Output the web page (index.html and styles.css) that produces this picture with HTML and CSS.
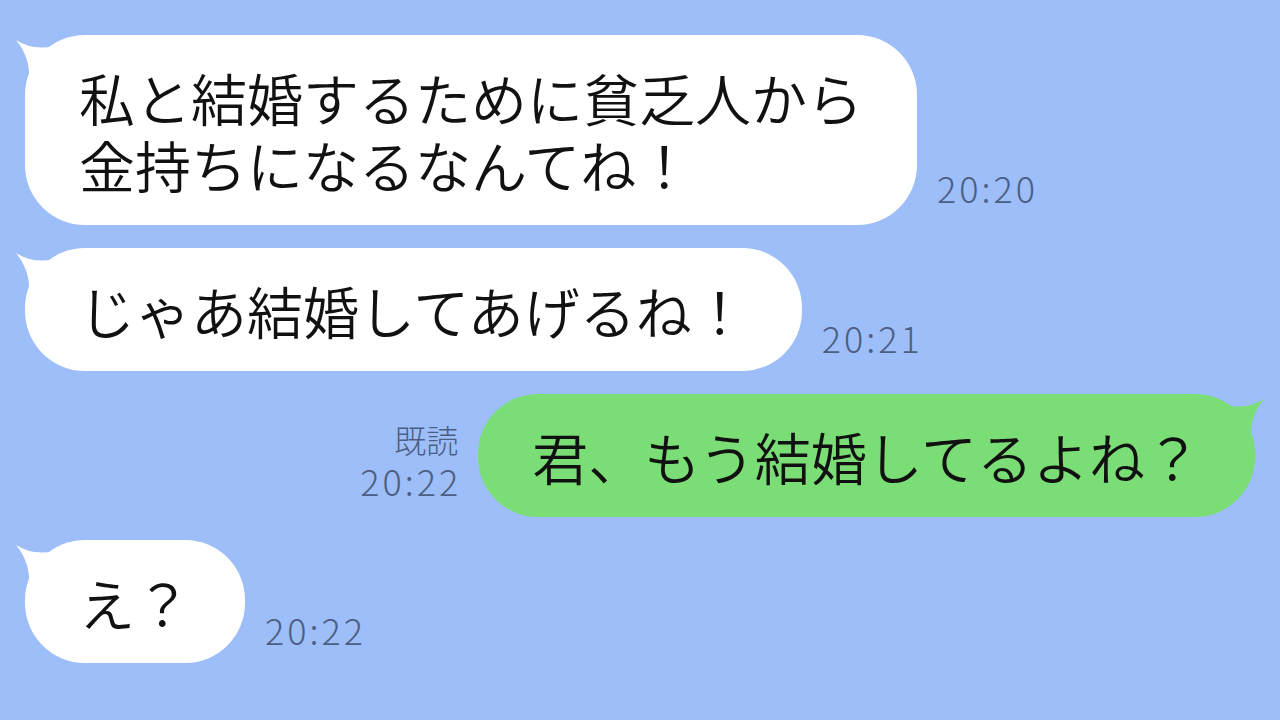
FILE: index.html
```html
<!DOCTYPE html>
<html lang="ja">
<head>
  <meta charset="UTF-8" />
  <meta name="viewport" content="width=device-width, initial-scale=1" />
  <title>トーク</title>
  <link rel="stylesheet" href="styles.css">
</head>
<body>
  <div class="talk">

    <div class="row">
      <div class="bubble">
        <svg class="tail" viewBox="0 0 44 44"><path d="M1 2 Q18 13 40 8 L44 44 L14 44 Q16 20 1 2 Z"/></svg>
        私と結婚するために貧乏人から<br>金持ちになるなんてね！
      </div>
      <div class="time t1">20:20</div>
    </div>

    <div class="row">
      <div class="bubble">
        <svg class="tail" viewBox="0 0 44 44"><path d="M1 2 Q18 13 40 8 L44 44 L14 44 Q16 20 1 2 Z"/></svg>
        じゃあ結婚してあげるね！
      </div>
      <div class="time">20:21</div>
    </div>

    <div class="row mine">
      <div class="meta">
        <span class="read">既読</span>
        <span class="time">20:22</span>
      </div>
      <div class="bubble">
        <svg class="tail" viewBox="0 0 44 44"><path d="M1 2 Q18 13 40 8 L44 44 L14 44 Q16 20 1 2 Z"/></svg>
        君、もう結婚してるよね？
      </div>
    </div>

    <div class="row">
      <div class="bubble">
        <svg class="tail" viewBox="0 0 44 44"><path d="M1 2 Q18 13 40 8 L44 44 L14 44 Q16 20 1 2 Z"/></svg>
        え？
      </div>
      <div class="time">20:22</div>
    </div>

  </div>
</body>
</html>
```

FILE: styles.css
```css
body {
  margin: 0;
  background: #9dbef8;
  font-family: "Noto Sans CJK JP", "Noto Sans", sans-serif;
  font-weight: 350;
  color: #111;
  width: 1280px;
  height: 720px;
  overflow: hidden;
}

.talk {
  display: flex;
  flex-direction: column;
  gap: 23px;
  padding: 35px 25px 0;
}

.row {
  display: flex;
  align-items: flex-end;
  gap: 20px;
}

.row.mine {
  justify-content: flex-end;
}

.bubble {
  position: relative;
  background: #fff;
  border-radius: 60px;
  padding: 28px 54px;
  font-size: 56px;
  line-height: 67px;
  white-space: nowrap;
}

.tail {
  position: absolute;
  left: -10px;
  top: 3px;
  width: 44px;
  height: 44px;
  fill: #fff;
}

.mine .bubble {
  background: #7bdd76;
}

.mine .tail {
  left: auto;
  right: -10px;
  fill: #7bdd76;
  transform: scaleX(-1);
}

.time {
  color: #4c5f83;
  font-size: 36px;
  font-weight: 300;
  line-height: 40px;
  letter-spacing: 3px;
  margin-bottom: 14px;
}

.time.t1 {
  margin-bottom: 18px;
}

.meta {
  display: flex;
  flex-direction: column;
  align-items: flex-end;
  margin-bottom: 17px;
}

.meta .time {
  margin-bottom: 0;
  margin-right: -3px;
}

.read {
  color: #4c5f83;
  font-size: 32px;
  font-weight: 300;
  line-height: 42px;
}
```
